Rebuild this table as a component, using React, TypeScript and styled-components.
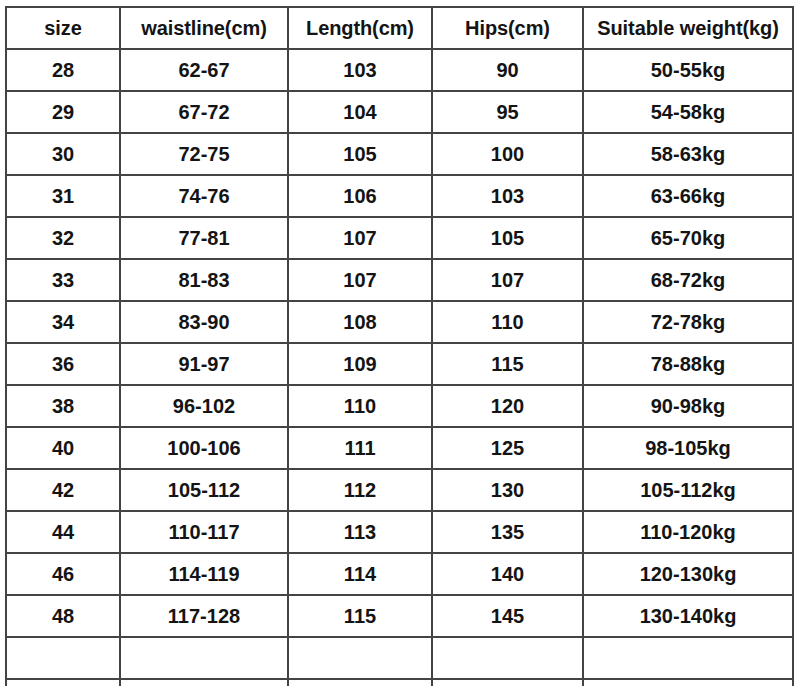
import styled, { createGlobalStyle } from "styled-components";

const GlobalStyle = createGlobalStyle`
  html, body {
    margin: 0;
    padding: 0;
    background: #fff;
    overflow: hidden;
  }
  body {
    font-family: "Liberation Sans", Arial, sans-serif;
  }
`;

const headers = ["size", "waistline(cm)", "Length(cm)", "Hips(cm)", "Suitable weight(kg)"];

const rows: string[][] = [
  ["28", "62-67", "103", "90", "50-55kg"],
  ["29", "67-72", "104", "95", "54-58kg"],
  ["30", "72-75", "105", "100", "58-63kg"],
  ["31", "74-76", "106", "103", "63-66kg"],
  ["32", "77-81", "107", "105", "65-70kg"],
  ["33", "81-83", "107", "107", "68-72kg"],
  ["34", "83-90", "108", "110", "72-78kg"],
  ["36", "91-97", "109", "115", "78-88kg"],
  ["38", "96-102", "110", "120", "90-98kg"],
  ["40", "100-106", "111", "125", "98-105kg"],
  ["42", "105-112", "112", "130", "105-112kg"],
  ["44", "110-117", "113", "135", "110-120kg"],
  ["46", "114-119", "114", "140", "120-130kg"],
  ["48", "117-128", "115", "145", "130-140kg"],
  ["", "", "", "", ""],
  ["", "", "", "", ""],
];

const Page = styled.div`
  height: 686px;
  padding: 6px 0 0 5px;
  box-sizing: border-box;
  overflow: hidden;
`;

const SizeGrid = styled.div`
  display: grid;
  grid-template-columns: 112px 166px 142px 149px 208px;
  grid-auto-rows: 40px;
  gap: 2px;
  padding: 2px;
  width: max-content;
  background: #444;
`;

const Cell = styled.div<{ $head?: boolean }>`
  background: #fff;
  display: flex;
  align-items: center;
  justify-content: center;
  font-size: 20px;
  font-weight: 700;
  color: #141414;
  letter-spacing: ${({ $head }) => ($head ? "-0.1px" : "0")};
  white-space: nowrap;
`;

export default function App() {
  return (
    <>
      <GlobalStyle />
      <Page>
        <SizeGrid>
          {headers.map((h) => (
            <Cell key={h} $head>
              {h}
            </Cell>
          ))}
          {rows.map((r, i) =>
            r.map((v, j) => <Cell key={`${i}-${j}`}>{v}</Cell>)
          )}
        </SizeGrid>
      </Page>
    </>
  );
}
